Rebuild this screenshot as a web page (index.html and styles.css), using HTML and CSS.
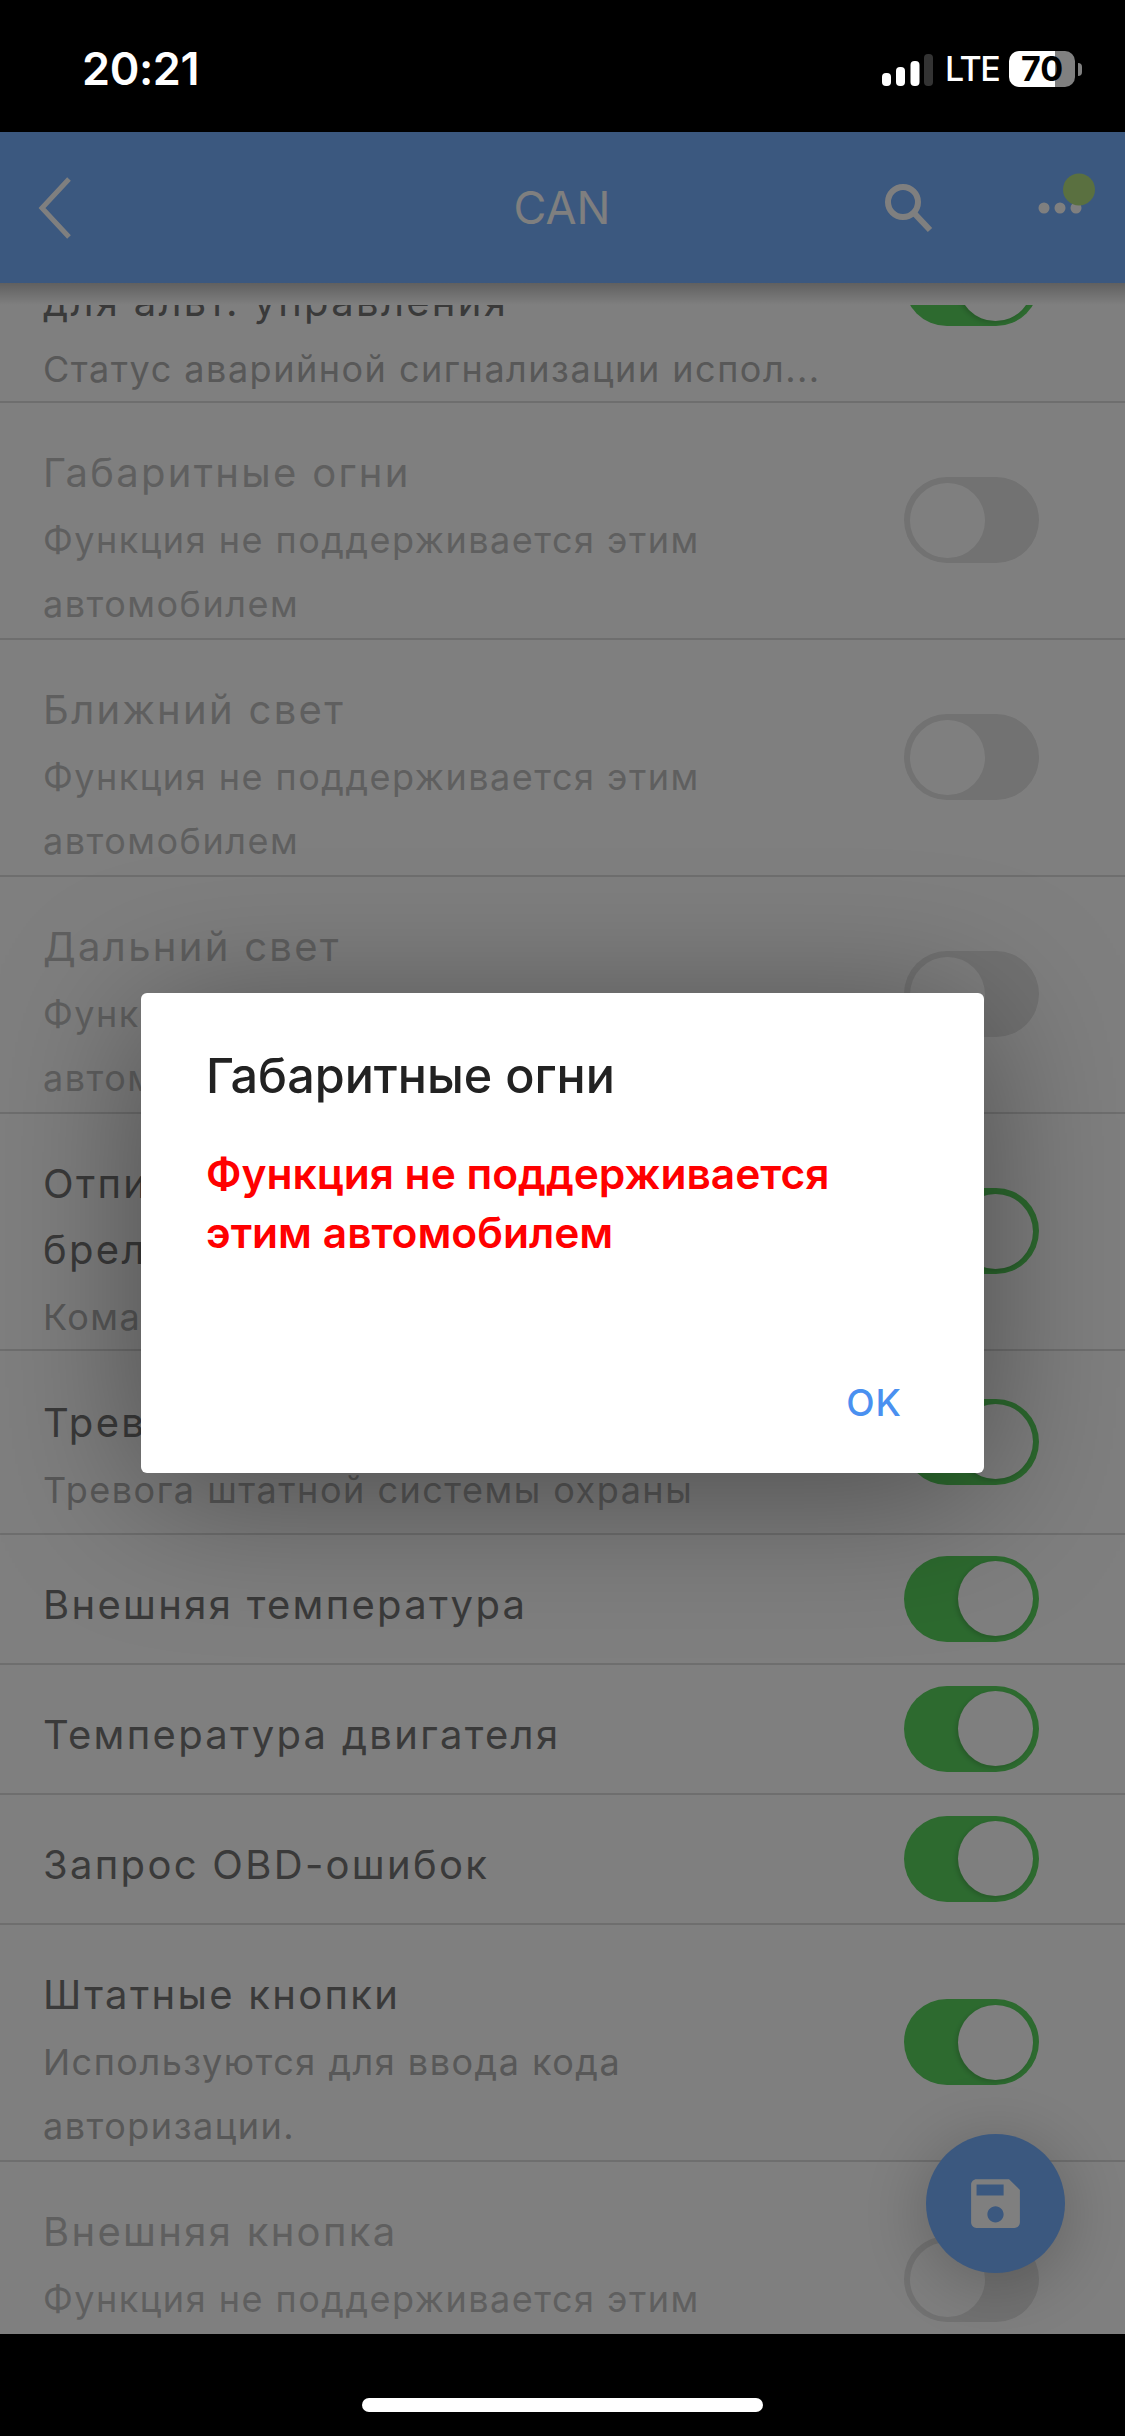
FILE: index.html
```html
<!DOCTYPE html>
<html lang="ru">
<head>
  <meta charset="UTF-8" />
  <meta name="viewport" content="width=device-width, initial-scale=1.0"/>
  <title>CAN</title>
  <link rel="stylesheet" href="styles.css">
</head>
<body>
<div class="screen">

  <div class="status-bar">
    <span class="clock">20:21</span>
    <div class="status-right">
      <svg class="signal" width="51" height="32" viewBox="0 0 51 32">
        <rect x="0" y="19" width="9" height="13" rx="4" fill="#fff"/>
        <rect x="14" y="13" width="9" height="19" rx="4" fill="#fff"/>
        <rect x="28.5" y="7" width="9" height="25" rx="4" fill="#fff"/>
        <rect x="42" y="0" width="9" height="32" rx="4" fill="#333"/>
      </svg>
      <span class="lte">LTE</span>
      <div class="battery"><span>70</span></div>
      <div class="battery-nub"></div>
    </div>
  </div>

  <header class="app-bar">
    <svg class="back" width="34" height="62" viewBox="0 0 34 62">
      <path d="M31 2 L4 31 L31 60" fill="none" stroke="#fff" stroke-width="5"/>
    </svg>
    <h1>CAN</h1>
    <div class="app-actions">
      <svg width="50" height="50" viewBox="0 0 50 50">
        <circle cx="19" cy="19" r="15" fill="none" stroke="#fff" stroke-width="6"/>
        <path d="M30 30 L46 47" fill="none" stroke="#fff" stroke-width="6"/>
      </svg>
      <svg class="more" width="66" height="80" viewBox="0 0 66 80">
        <circle cx="14" cy="40" r="5.5" fill="#fff"/>
        <circle cx="30" cy="40" r="5.5" fill="#fff"/>
        <circle cx="46" cy="40" r="5.5" fill="#fff"/>
        <circle cx="49" cy="21.500" r="16" fill="#b4e080"/>
      </svg>
    </div>
  </header>

  <main class="content">
    <div class="bar-shadow"></div>
    <div class="list">

      <div class="row">
        <div class="row-text">
          <div class="row-title">Аварийная сигнализация<br>для альт. управления</div>
          <div class="row-sub">Статус аварийной сигнализации испол...</div>
        </div>
        <div class="toggle on"><i></i></div>
      </div>

      <div class="row disabled">
        <div class="row-text">
          <div class="row-title">Габаритные огни</div>
          <div class="row-sub">Функция не поддерживается этим автомобилем</div>
        </div>
        <div class="toggle"><i></i></div>
      </div>

      <div class="row disabled">
        <div class="row-text">
          <div class="row-title">Ближний свет</div>
          <div class="row-sub">Функция не поддерживается этим автомобилем</div>
        </div>
        <div class="toggle"><i></i></div>
      </div>

      <div class="row disabled">
        <div class="row-text">
          <div class="row-title">Дальний свет</div>
          <div class="row-sub">Функция не поддерживается этим автомобилем</div>
        </div>
        <div class="toggle"><i></i></div>
      </div>

      <div class="row">
        <div class="row-text">
          <div class="row-title">Отпирание штатным<br>брелком</div>
          <div class="row-sub">Команда штатного брелка</div>
        </div>
        <div class="toggle on"><i></i></div>
      </div>

      <div class="row row-two">
        <div class="row-text">
          <div class="row-title">Тревога</div>
          <div class="row-sub">Тревога штатной системы охраны</div>
        </div>
        <div class="toggle on"><i></i></div>
      </div>

      <div class="row row-one">
        <div class="row-text"><div class="row-title">Внешняя температура</div></div>
        <div class="toggle on"><i></i></div>
      </div>

      <div class="row row-one">
        <div class="row-text"><div class="row-title">Температура двигателя</div></div>
        <div class="toggle on"><i></i></div>
      </div>

      <div class="row row-one">
        <div class="row-text"><div class="row-title">Запрос OBD-ошибок</div></div>
        <div class="toggle on"><i></i></div>
      </div>

      <div class="row">
        <div class="row-text">
          <div class="row-title">Штатные кнопки</div>
          <div class="row-sub">Используются для ввода кода авторизации.</div>
        </div>
        <div class="toggle on"><i></i></div>
      </div>

      <div class="row disabled">
        <div class="row-text">
          <div class="row-title">Внешняя кнопка</div>
          <div class="row-sub">Функция не поддерживается этим автомобилем</div>
        </div>
        <div class="toggle"><i></i></div>
      </div>

    </div>

    <div class="fab">
      <svg width="65" height="65" viewBox="0 0 24 24">
        <path fill="#fff" d="M17 3H5c-1.110 0-2 .9-2 2v14c0 1.100.89 2 2 2h14c1.100 0 2-.9 2-2V7l-4-4zm-5 16c-1.660 0-3-1.340-3-3s1.340-3 3-3 3 1.340 3 3-1.340 3-3 3zm3-10H5V5h10v4z"/>
      </svg>
    </div>
  </main>

  <div class="home-bar"><div class="home-pill"></div></div>

  <!-- dialog + dim layer -->
  <div class="overlay">
    <div class="dialog">
      <h2>Габаритные огни</h2>
      <p>Функция не поддерживается этим автомобилем</p>
      <div class="dialog-actions"><span class="dialog-ok">OK</span></div>
    </div>
  </div>

</div>
</body>
</html>
```

FILE: styles.css
```css
* { box-sizing: border-box; }
html, body { margin: 0; padding: 0; background: #000; }
body { font-family: Inter, "Noto Sans", sans-serif; }

.screen { position: relative; width: 1125px; height: 2436px; display: flex; flex-direction: column; overflow: hidden; background: #000; }

/* status bar */
.status-bar { height: 132px; flex: none; display: flex; justify-content: space-between; align-items: flex-start; padding: 46px 43px 0 82px; color: #fff; }
.clock { font-size: 45px; font-weight: 600; line-height: 46px; letter-spacing: -0.4px; }
.status-right { display: flex; align-items: center; padding-top: 5px; }
.signal { display: block; margin-top: 2px; }
.lte { font-size: 34px; font-weight: 500; line-height: 36px; margin-left: 12px; width: 64px; letter-spacing: -1.5px; }
.battery { width: 66px; height: 36px; border-radius: 10px; background: linear-gradient(to right, #fff 70%, #808080 70%); color: #000; font-size: 34px; font-weight: 700; line-height: 36px; padding-left: 12px; }
.battery-nub { width: 4px; height: 13px; margin-left: 3px; border-radius: 0 4px 4px 0; background: #808080; }

/* app bar */
.app-bar { height: 151px; flex: none; background: #76b0ff; display: grid; grid-template-columns: 1fr auto 1fr; align-items: center; padding: 0 29px 0 38px; }
.app-bar h1 { margin: 0 0 0 -10px; font-size: 45px; font-weight: 400; color: #fff; }
.back { display: block; }
.app-actions { display: flex; justify-content: flex-end; align-items: center; gap: 96px; }
.app-actions svg { display: block; }

/* list */
.content { position: relative; flex: 1; min-height: 0; overflow: hidden; background: #fff; }
.bar-shadow { position: absolute; z-index: 2; left: 0; right: 0; top: 0; height: 22px; background: linear-gradient(to bottom, #c0c0c0, #fff); }
.list { margin-top: -117.5px; }

.row { display: flex; align-items: center; height: 237px; padding: 0 86px 0 43px; border-bottom: 2px solid #dcdcdc; }
.row-two { height: 184px; }
.row-one { height: 130px; }
.row-text { flex: 1; min-width: 0; padding-right: 60px; align-self: flex-start; padding-top: 37px; }
.row-title { font-size: 40px; line-height: 66px; letter-spacing: 2.3px; color: #757575; margin-bottom: 2px; }
.row-sub { font-size: 36px; line-height: 64.5px; letter-spacing: 1.5px; color: #b0b0b0; }
.row-two .row-text { padding-top: 39px; }
.disabled .row-title, .disabled .row-sub { color: #bebebe; }

.toggle { flex: none; width: 135px; height: 86px; border-radius: 43px; background: #e4e4e4; display: flex; align-items: center; justify-content: flex-start; padding: 0 6px; }
.toggle i { display: block; width: 75px; height: 75px; border-radius: 50%; background: #fff; }
.toggle.on { background: #5ad45f; justify-content: flex-end; }
.toggle.on i { box-shadow: -2px 2px 4px rgba(0, 0, 0, .15); }

.fab { position: absolute; z-index: 3; left: 926px; top: 1851px; width: 139px; height: 139px; border-radius: 50%; background: #76b0ff; display: flex; align-items: center; justify-content: center; box-shadow: 0 10px 70px rgba(0, 0, 0, .25); }
.fab svg { display: block; }

/* bottom */
.home-bar { height: 102px; flex: none; background: #000; display: flex; justify-content: center; padding-top: 64px; }
.home-pill { width: 401px; height: 14px; border-radius: 7px; background: #fff; }

/* dialog */
.overlay { position: absolute; z-index: 5; left: 0; right: 0; top: 132px; bottom: 102px; background: rgba(0, 0, 0, .5); display: flex; align-items: center; justify-content: center; }
.dialog { width: 843px; height: 480px; background: #fff; border-radius: 6px; padding: 56px 82px 0 65px; display: flex; flex-direction: column; box-shadow: 0 20px 150px rgba(0, 0, 0, .4); }
.dialog h2 { margin: 0; font-size: 48.5px; font-weight: 550; line-height: 54px; color: #222; }
.dialog p { margin: 41px 0 0; font-size: 42.5px; font-weight: 600; line-height: 59px; color: #f00; }
.dialog-actions { margin-top: auto; padding-bottom: 48px; display: flex; justify-content: flex-end; }
.dialog-ok { font-size: 37px; font-weight: 500; line-height: 44px; letter-spacing: 1px; color: #4a90f0; }
```
